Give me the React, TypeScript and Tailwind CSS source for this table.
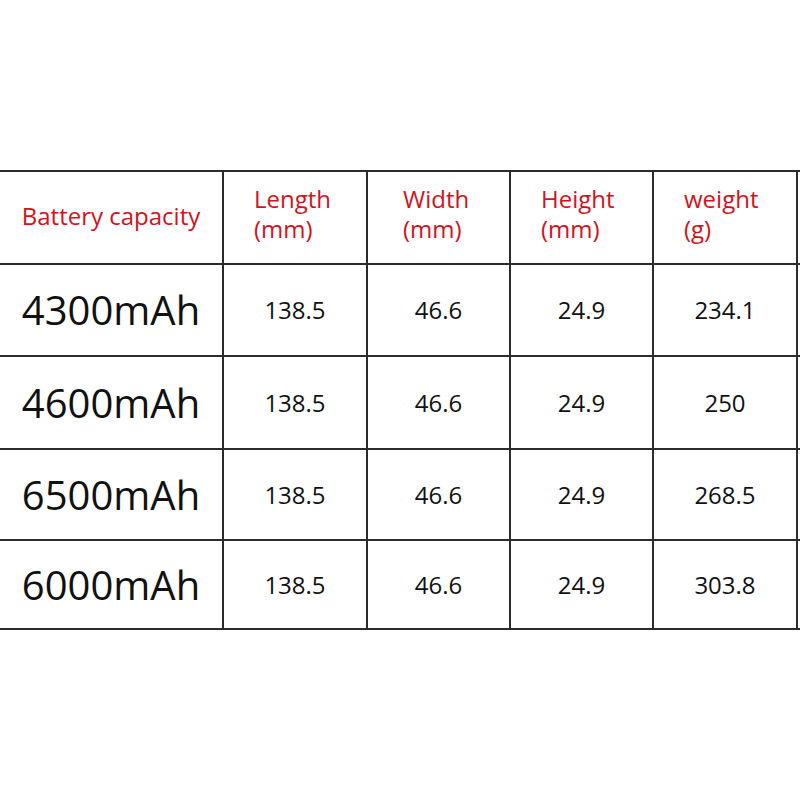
const rows = [
  { cap: "4300mAh", len: "138.5", wid: "46.6", hei: "24.9", wt: "234.1", h: "h-[92px]" },
  { cap: "4600mAh", len: "138.5", wid: "46.6", hei: "24.9", wt: "250", h: "h-[93px]" },
  { cap: "6500mAh", len: "138.5", wid: "46.6", hei: "24.9", wt: "268.5", h: "h-[91px]" },
  { cap: "6000mAh", len: "138.5", wid: "46.6", hei: "24.9", wt: "303.8", h: "h-[89px]" },
];

const COLS = "grid grid-cols-[222px_144px_143px_143px_144px_1fr]";

function Head({ top, bottom, pad }: { top: string; bottom: string; pad: string }) {
  return (
    <div className={`flex flex-col justify-center border-l-2 border-[#2b2b2b] pb-[8px] text-[24px] leading-[30px] text-[#d2121c] ${pad}`}>
      <span>{top}</span>
      <span>{bottom}</span>
    </div>
  );
}

function Cell({ children }: { children: React.ReactNode }) {
  return (
    <div className="flex items-center justify-center border-l-2 border-[#2b2b2b] text-[24px] leading-none text-[#111]">
      {children}
    </div>
  );
}

export default function App() {
  return (
    <div className="min-h-[800px] w-[800px] overflow-hidden bg-white pt-[170px] font-['Open_Sans',sans-serif]">
      <div className="border-b-2 border-[#2b2b2b]">
        {/* header */}
        <div className={`${COLS} h-[93px] border-t-2 border-[#2b2b2b]`}>
          <div className="flex items-center justify-center pb-[4px] text-[24px] leading-[30px] text-[#d2121c]">
            Battery capacity
          </div>
          <Head top="Length" bottom="(mm)" pad="pl-[30px]" />
          <Head top="Width" bottom="(mm)" pad="pl-[35px]" />
          <Head top="Height" bottom="(mm)" pad="pl-[30px]" />
          <Head top="weight" bottom="(g)" pad="pl-[30px]" />
          <div className="border-l-2 border-[#2b2b2b]" />
        </div>

        {rows.map((r) => (
          <div key={r.cap} className={`${COLS} ${r.h} border-t-2 border-[#2b2b2b]`}>
            <div className="flex items-center justify-center text-[40px] leading-none text-[#111]">
              {r.cap}
            </div>
            <Cell>{r.len}</Cell>
            <Cell>{r.wid}</Cell>
            <Cell>{r.hei}</Cell>
            <Cell>{r.wt}</Cell>
            <div className="border-l-2 border-[#2b2b2b]" />
          </div>
        ))}
      </div>
    </div>
  );
}
